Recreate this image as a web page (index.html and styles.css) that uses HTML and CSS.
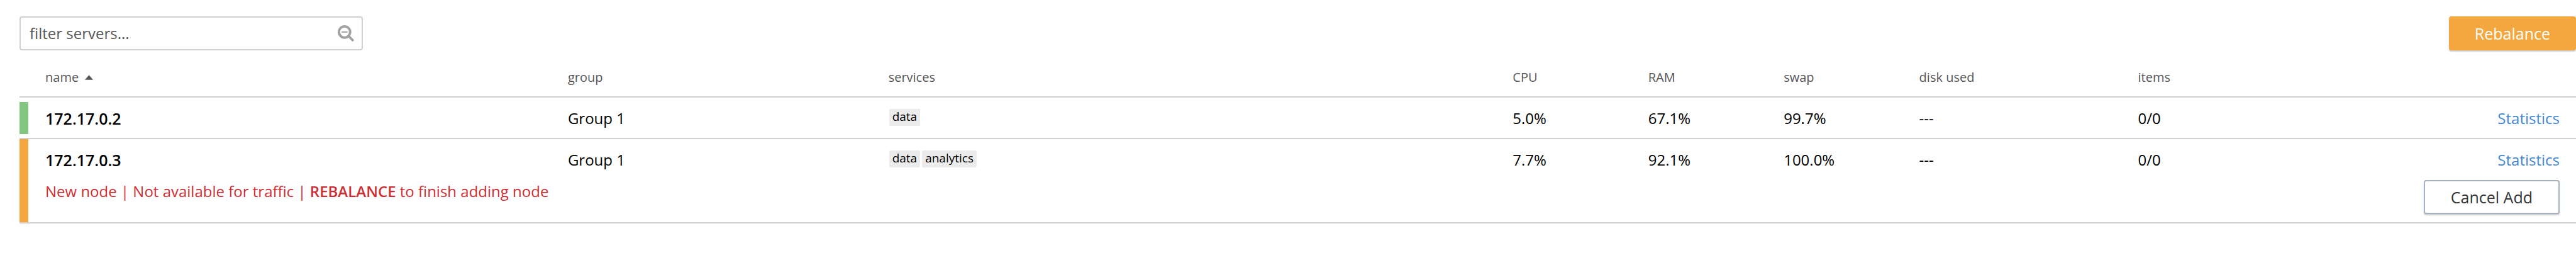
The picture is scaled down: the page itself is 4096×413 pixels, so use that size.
FILE: index.html
```html
<!DOCTYPE html>
<html lang="en">
<head>
<meta charset="utf-8">
<title>Servers</title>
<link rel="stylesheet" href="styles.css">
</head>
<body>
<main class="servers">
  <div class="toolbar">
    <label class="filter">
      <input class="filter-input" type="text" placeholder="filter servers..." aria-label="filter servers">
      <svg class="filter-icon" viewBox="0 0 30 30" aria-hidden="true">
        <circle cx="12.5" cy="12.5" r="10.3" fill="none" stroke="#a2a2a2" stroke-width="4.4"/>
        <path d="M7 12.5H18" stroke="#a2a2a2" stroke-width="2.4"/>
        <path d="M20 20L27.5 27.5" stroke="#a2a2a2" stroke-width="4.4" stroke-linecap="round"/>
      </svg>
    </label>
    <button class="button button-primary" type="button">Rebalance</button>
  </div>
  <table class="nodes">
    <colgroup>
      <col class="col-status"><col class="col-name"><col class="col-group"><col class="col-services">
      <col class="col-metric"><col class="col-metric"><col class="col-metric"><col class="col-disk"><col class="col-items"><col>
    </colgroup>
    <thead>
      <tr>
        <td></td>
        <th scope="col" aria-sort="ascending"><span class="sort">name <svg class="sort-icon" viewBox="0 0 12 7" aria-hidden="true"><path d="M6 0L12 7H0Z" fill="#555"/></svg></span></th>
        <th scope="col">group</th>
        <th scope="col">services</th>
        <th scope="col">CPU</th>
        <th scope="col">RAM</th>
        <th scope="col">swap</th>
        <th scope="col">disk used</th>
        <th scope="col">items</th>
        <td></td>
      </tr>
    </thead>
    <tbody>
      <tr class="node">
        <td class="status status-healthy"></td>
        <td class="node-name">172.17.0.2</td>
        <td>Group 1</td>
        <td><div class="tags"><span class="tag">data</span></div></td>
        <td>5.0%</td>
        <td>67.1%</td>
        <td>99.7%</td>
        <td>---</td>
        <td>0/0</td>
        <td class="actions"><a class="link" href="#">Statistics</a></td>
      </tr>
    </tbody>
    <tbody>
      <tr class="node node-open">
        <td class="status status-pending" rowspan="2"></td>
        <td class="node-name">172.17.0.3</td>
        <td>Group 1</td>
        <td><div class="tags"><span class="tag">data</span><span class="tag">analytics</span></div></td>
        <td>7.7%</td>
        <td>92.1%</td>
        <td>100.0%</td>
        <td>---</td>
        <td>0/0</td>
        <td class="actions"><a class="link" href="#">Statistics</a></td>
      </tr>
      <tr class="node-detail">
        <td colspan="9">
          <div class="notice">
            <p class="message">New node | Not available for traffic | <strong>REBALANCE</strong> to finish adding node</p>
            <button class="button button-outline" type="button">Cancel Add</button>
          </div>
        </td>
      </tr>
    </tbody>
  </table>
</main>
</body>
</html>
```
FILE: styles.css
```css
body {
  margin: 0;
  background: #fff;
  color: #000;
  font-family: "Open Sans", "Noto Sans", sans-serif;
  font-size: 24px;
  line-height: 32px;
}

.servers {
  padding: 26px 0 0 31px;
}

.toolbar {
  display: flex;
  justify-content: space-between;
  align-items: center;
}

.filter {
  display: flex;
  align-items: center;
  box-sizing: border-box;
  width: 546px;
  height: 54px;
  padding: 0 12px 0 14px;
  border: 2px solid #d0d0d0;
  border-radius: 4px;
}

.filter-input {
  flex: 1;
  min-width: 0;
  padding: 0;
  border: 0;
  outline: 0;
  background: none;
  color: #555;
  font: inherit;
}

.filter-input::placeholder {
  color: #555;
  opacity: 1;
}

.filter-icon {
  width: 26px;
  height: 26px;
}

.button {
  box-sizing: border-box;
  height: 54px;
  padding: 0 39px;
  border: 2px solid transparent;
  border-radius: 4px;
  font: inherit;
  font-size: 25px;
  white-space: nowrap;
  box-shadow: 0 2px 2px rgba(0, 0, 0, 0.2);
}

.button-primary {
  border-color: #f5a73f;
  background: #f5a73f;
  color: #fff;
}

.button-outline {
  padding: 0 41px;
  border-color: #a6b2be;
  background: #fff;
  color: #333;
}

.nodes {
  width: 100%;
  table-layout: fixed;
  border-spacing: 0;
}

.col-status { width: 41px; }
.col-name { width: 20.44%; }
.col-group { width: 12.54%; }
.col-services { width: 24.42%; }
.col-metric { width: 5.3%; }
.col-disk { width: 8.56%; }
.col-items { width: 6%; }

th,
td {
  padding: 0;
  text-align: left;
  vertical-align: top;
}

thead th,
thead td {
  padding: 29px 0 16px;
  border-bottom: 2px solid #d0d0d0;
  color: #555;
  font-size: 20px;
  font-weight: 400;
  line-height: 28px;
}

.sort {
  display: flex;
  align-items: center;
  gap: 10px;
}

.sort-icon {
  width: 13px;
  height: 8px;
}

.node td {
  padding: 17px 0 15px;
  border-bottom: 2px solid #d0d0d0;
}

.node-open td {
  padding-bottom: 0;
  border-bottom: 0;
}

.node .status {
  padding: 0;
  border-bottom: 2px solid #d0d0d0;
}

.status-healthy {
  background: linear-gradient(#84c680, #84c680) left center / 14px 51px no-repeat;
}

.status-pending {
  background: linear-gradient(#f5a73f, #f5a73f) left top / 14px 100% no-repeat border-box;
}

.node .node-name {
  font-size: 25px;
  font-weight: 600;
}

.tags {
  display: flex;
  gap: 3px;
  padding: 1px;
}

.tag {
  padding: 1px 5px 3px;
  border-radius: 2px;
  background: #ebebeb;
  font-size: 19px;
  line-height: 23px;
}

.node .actions {
  padding-right: 26px;
  text-align: right;
}

.link {
  color: #4287d6;
  text-decoration: none;
}

.node-detail td {
  border-bottom: 2px solid #d0d0d0;
}

.notice {
  display: flex;
  justify-content: space-between;
  align-items: flex-end;
  padding: 0 26px 13px 0;
}

.message {
  margin: 0;
  padding-bottom: 2px;
  color: #cb2e33;
  line-height: 68px;
}

.message strong {
  font-weight: 600;
}
```
